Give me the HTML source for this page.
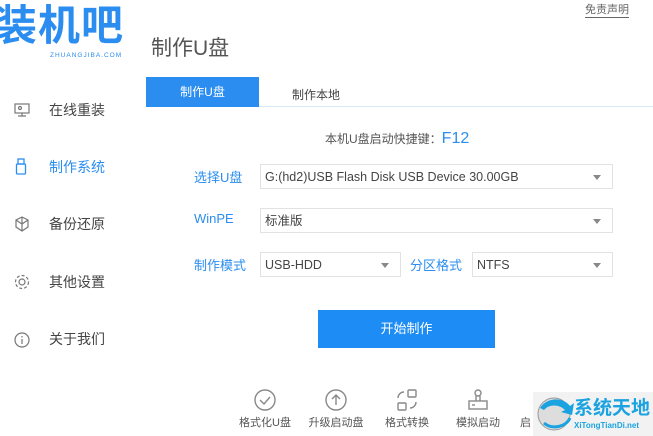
<!DOCTYPE html><html><head><meta charset="utf-8"><style>
body{margin:0;width:653px;height:436px;overflow:hidden;background:#fff;font-family:"Liberation Sans","Noto Sans CJK SC",sans-serif;position:relative}
.a{position:absolute;white-space:nowrap}
.side{font-size:14px;color:#444}
.lbl{font-size:13px;color:#2b8df0}
.sel{position:absolute;height:25px;border:1px solid #e2e2e2;background:#fff;font-size:12.5px;color:#444;line-height:25px;padding-left:4px;box-sizing:border-box}
.sel:after{content:"";position:absolute;right:11px;top:10px;border:4px solid transparent;border-top:5px solid #888}
.tool{font-size:11px;color:#555;text-align:center;width:70px}
</style></head><body>
<div class="a" style="left:-5px;top:1px;font-size:42px;font-weight:bold;color:#2b8df0;letter-spacing:1px;line-height:50px">装机吧</div>
<div class="a" style="left:50px;top:52px;font-size:6.5px;color:#2b8df0;letter-spacing:1px">ZHUANGJIBA.COM</div>
<div class="a" style="left:585px;top:3px;font-size:11px;color:#666;border-bottom:1px solid #666;line-height:14px">免责声明</div>
<div class="a" style="left:151px;top:32px;font-size:21px;color:#555">制作U盘</div>
<svg class="a" style="left:13px;top:102px" width="18" height="16" viewBox="0 0 18 16" fill="none" stroke="#777" stroke-width="1.2"><rect x="2" y="2" width="14" height="9"/><path d="M9 11v3M5 14h8"/><circle cx="7" cy="6" r="1.5"/></svg>
<div class="a side" style="left:49px;top:100px">在线重装</div>
<svg class="a" style="left:15px;top:158px" width="12" height="18" viewBox="0 0 12 18" fill="none" stroke="#2b8df0" stroke-width="1.3"><rect x="3" y="1" width="6" height="5"/><rect x="1.5" y="6" width="9" height="10" rx="1"/></svg>
<div class="a side" style="left:49px;top:157px;color:#2b8df0">制作系统</div>
<svg class="a" style="left:13px;top:215px" width="18" height="18" viewBox="0 0 18 18" fill="none" stroke="#777" stroke-width="1.2"><path d="M9 2l6 3v7l-6 4-6-4V5z M9 2v14 M3 5l6 4 6-4"/></svg>
<div class="a side" style="left:49px;top:214px">备份还原</div>
<svg class="a" style="left:13px;top:273px" width="18" height="18" viewBox="0 0 18 18" fill="none" stroke="#777" stroke-width="1.2"><circle cx="9" cy="9" r="3"/><circle cx="9" cy="9" r="6.5" stroke-dasharray="3 2"/></svg>
<div class="a side" style="left:49px;top:272px">其他设置</div>
<svg class="a" style="left:13px;top:331px" width="18" height="18" viewBox="0 0 18 18" fill="none" stroke="#777" stroke-width="1.2"><circle cx="9" cy="9" r="7"/><path d="M9 8v5M9 5v1.5"/></svg>
<div class="a side" style="left:49px;top:329px">关于我们</div>
<div class="a" style="left:146px;top:106px;width:507px;height:1px;background:#d8e6f5"></div>
<div class="a" style="left:146px;top:77px;width:113px;height:30px;background:#2b8df0;color:#fff;font-size:12px;text-align:center;line-height:31px">制作U盘</div>
<div class="a" style="left:292px;top:86px;font-size:12px;color:#444">制作本地</div>
<div class="a" style="left:325px;top:130px;font-size:12px;color:#555">本机U盘启动快捷键：<span style="color:#2b8df0;font-size:16px">F12</span></div>
<div class="a lbl" style="left:194px;top:167px">选择U盘</div>
<div class="sel" style="left:260px;top:164px;width:353px">G:(hd2)USB Flash Disk USB Device 30.00GB</div>
<div class="a lbl" style="left:194px;top:211px">WinPE</div>
<div class="sel" style="left:260px;top:208px;width:353px">标准版</div>
<div class="a lbl" style="left:194px;top:255px">制作模式</div>
<div class="sel" style="left:260px;top:252px;width:141px">USB-HDD</div>
<div class="a lbl" style="left:410px;top:255px">分区格式</div>
<div class="sel" style="left:472px;top:252px;width:141px">NTFS</div>
<div class="a" style="left:318px;top:310px;width:177px;height:38px;background:#1e8cf5;color:#fff;font-size:13px;text-align:center;line-height:38px">开始制作</div>
<svg class="a" style="left:253px;top:388px" width="24" height="24" viewBox="0 0 24 24" fill="none" stroke="#888" stroke-width="1.4"><circle cx="12" cy="12" r="10"/><path d="M7 12l4 4 6-7"/></svg>
<div class="a tool" style="left:230px;top:414px">格式化U盘</div>
<svg class="a" style="left:324px;top:388px" width="24" height="24" viewBox="0 0 24 24" fill="none" stroke="#888" stroke-width="1.4"><circle cx="12" cy="12" r="10"/><path d="M12 17V7M8 11l4-4 4 4"/></svg>
<div class="a tool" style="left:301px;top:414px">升级启动盘</div>
<svg class="a" style="left:395px;top:388px" width="24" height="24" viewBox="0 0 24 24" fill="none" stroke="#888" stroke-width="1.4"><rect x="13" y="2" width="8" height="7" rx="1"/><rect x="3" y="15" width="8" height="7" rx="1"/><path d="M3 10a6 6 0 0 1 6-6M21 14a6 6 0 0 1-6 6"/></svg>
<div class="a tool" style="left:372px;top:414px">格式转换</div>
<svg class="a" style="left:466px;top:388px" width="24" height="24" viewBox="0 0 24 24" fill="none" stroke="#888" stroke-width="1.4"><circle cx="12" cy="5" r="3"/><path d="M10 8v5M14 8v5"/><rect x="3" y="13" width="18" height="8"/><path d="M6 17h3"/></svg>
<div class="a tool" style="left:443px;top:414px">模拟启动</div>
<div class="a" style="left:520px;top:414px;font-size:11px;color:#555">启</div>
<div class="a" style="left:533px;top:392px;width:120px;height:44px;background:#f2f2f2"></div>
<svg class="a" style="left:534px;top:392px" width="42" height="42" viewBox="0 0 42 42"><circle cx="20" cy="22" r="16" fill="#ddd" stroke="#999"/><path d="M6 16c6-10 22-12 30-2l4-3-2 12-11-3 4-2c-6-6-16-6-21 0z" fill="#1aa3e0"/><path d="M36 26c-4 9-18 12-26 5" stroke="#1aa3e0" stroke-width="3" fill="none"/></svg>
<div class="a" style="left:574px;top:393px;font-size:19px;font-weight:bold;color:#1aa3e0">系统天地</div>
<div class="a" style="left:574px;top:421px;font-size:8px;font-weight:bold;color:#1aa3e0">XiTongTianDi.net</div>
</body></html>
